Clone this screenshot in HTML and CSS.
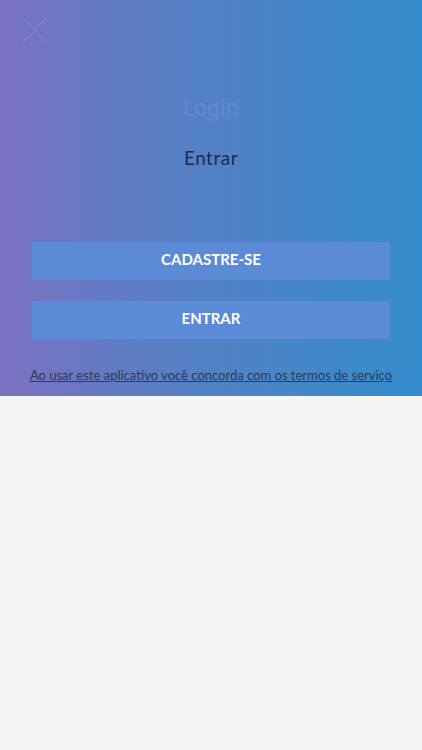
FILE: index.html
```html
<!DOCTYPE html>
<html lang="pt-BR">
<head>
    <meta charset="UTF-8">
    <meta name="viewport" content="width=device-width, initial-scale=1.0">
    <title>Login</title>
    <link rel="stylesheet" href="styles.css">
</head>
<body>
    <div class="hero">
        <div class="topbar">
            <button class="close" aria-label="Fechar">
                <svg width="26" height="28" viewBox="0 0 26 28">
                    <path d="M1 1 L25 27 M25 1 L1 27" stroke="#6d8dd4" stroke-width="1.1" fill="none"/>
                </svg>
            </button>
        </div>
        <h1 class="title">Login</h1>
        <p class="subtitle">Entrar</p>
        <div class="actions">
            <button class="btn">CADASTRE-SE</button>
            <button class="btn">ENTRAR</button>
        </div>
        <a class="terms" href="#">Ao usar este aplicativo você concorda com os termos de serviço</a>
    </div>
</body>
</html>
```

FILE: styles.css
```css
body {
    margin: 0;
    padding: 0;
    background-color: #f5f5f5;
    font-family: Lato, "Open Sans", sans-serif;
}

.hero {
    height: 396px;
    box-sizing: border-box;
    background: linear-gradient(to right, #7b71c1 0%, #5f7cc4 30%, #4f83c6 55%, #3f89c9 80%, #348bcb 100%);
    display: flex;
    flex-direction: column;
    align-items: center;
    padding: 0 32px;
}

.topbar {
    align-self: stretch;
    height: 90px;
    margin: 0 -32px;
    padding: 16px 0 0 22px;
    box-sizing: border-box;
}

.close {
    background: none;
    border: none;
    padding: 0;
    cursor: pointer;
    display: block;
}

.title {
    margin: 0;
    font-family: "DejaVu Sans Condensed", "DejaVu Sans", sans-serif;
    font-stretch: condensed;
    font-weight: normal;
    font-size: 23px;
    line-height: 36px;
    color: #6388d2;
}

.subtitle {
    margin: 20px 0 0;
    font-size: 19px;
    line-height: 24px;
    letter-spacing: 0.5px;
    color: #1f2b4d;
}

.actions {
    align-self: stretch;
    margin-top: 72px;
    display: flex;
    flex-direction: column;
    gap: 21px;
}

.btn {
    height: 38px;
    border: none;
    background-color: #5b8bd7;
    color: #fff;
    font-family: Lato, sans-serif;
    font-weight: bold;
    font-size: 15px;
    padding: 0 0 4px;
    cursor: pointer;
}

.terms {
    margin-top: 28px;
    font-size: 13px;
    color: #2f3a4f;
    text-decoration: underline;
    white-space: nowrap;
}
```
